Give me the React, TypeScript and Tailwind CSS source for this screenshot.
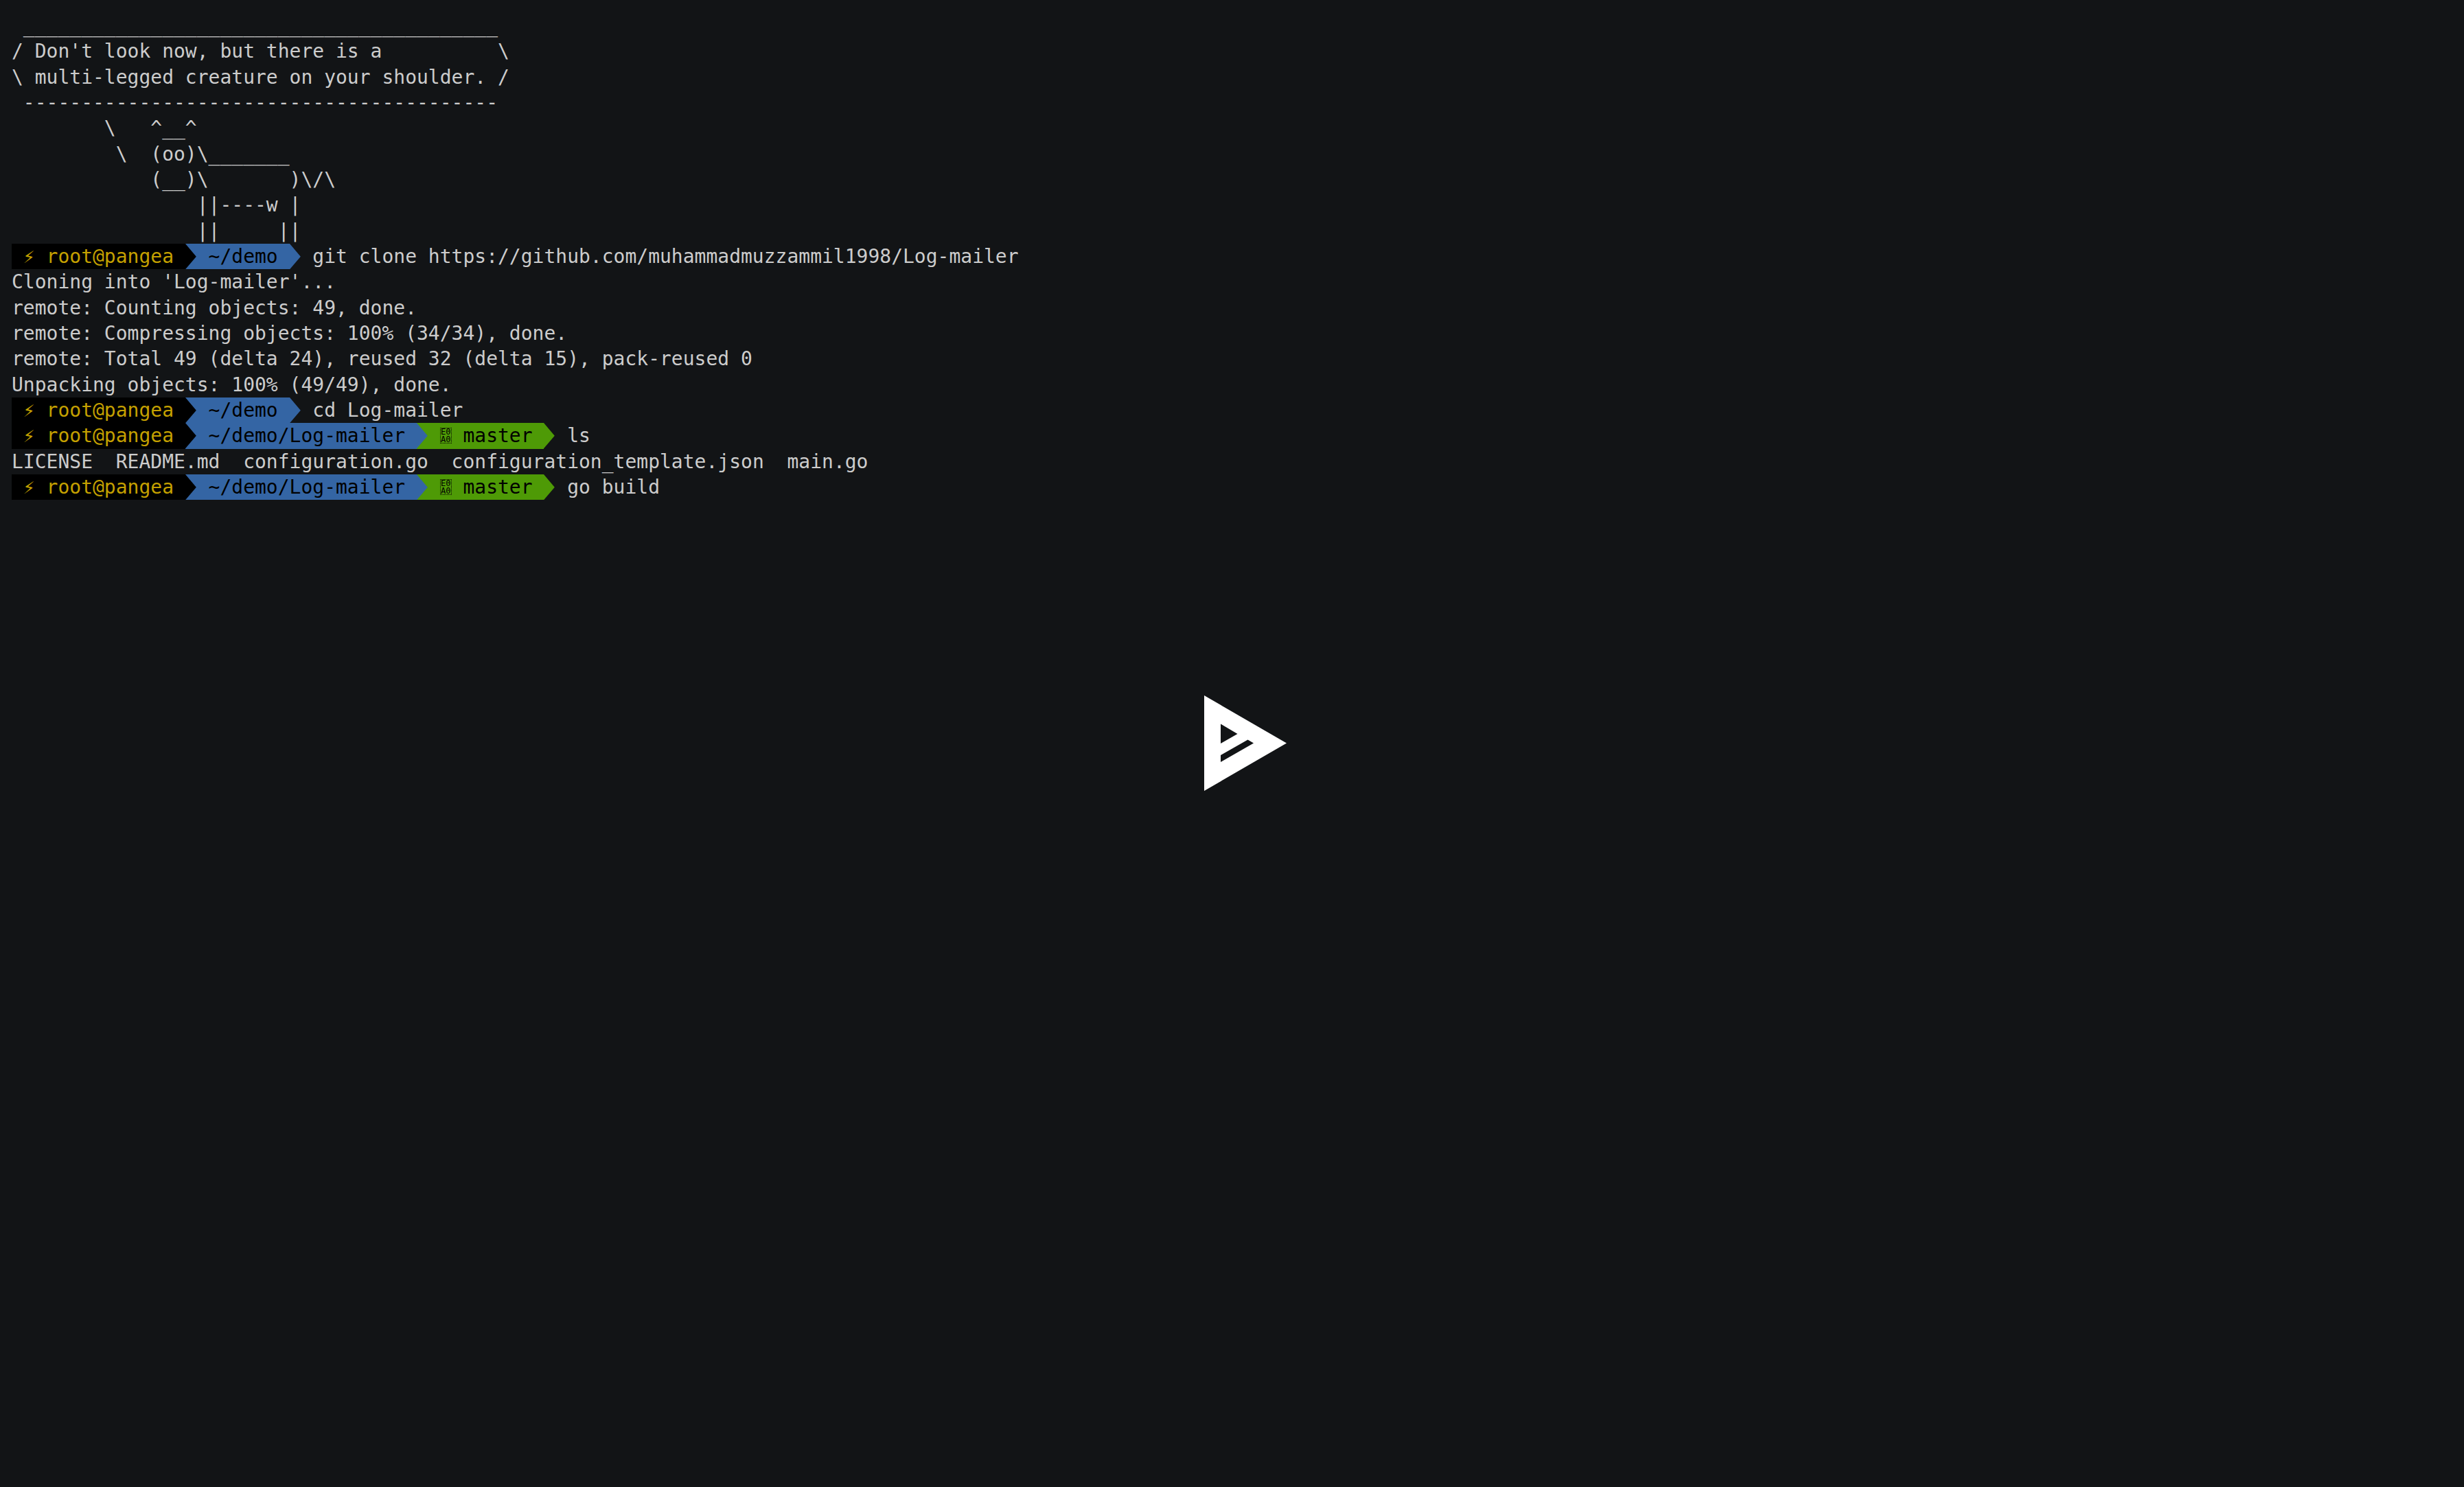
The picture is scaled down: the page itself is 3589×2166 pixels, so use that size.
import type { ReactNode } from "react";

const cowsay = [
  " _________________________________________",
  "/ Don't look now, but there is a          \\",
  "\\ multi-legged creature on your shoulder. /",
  " -----------------------------------------",
  "        \\   ^__^",
  "         \\  (oo)\\_______",
  "            (__)\\       )\\/\\",
  "                ||----w |",
  "                ||     ||",
];

const output = [
  "Cloning into 'Log-mailer'...",
  "remote: Counting objects: 49, done.",
  "remote: Compressing objects: 100% (34/34), done.",
  "remote: Total 49 (delta 24), reused 32 (delta 15), pack-reused 0",
  "Unpacking objects: 100% (49/49), done.",
];

function Line({ children }: { children: ReactNode }) {
  return <div className="h-[37.33px] whitespace-pre">{children}</div>;
}

// powerline separator, one terminal cell wide
function Arrow({ fill, bg }: { fill: string; bg: string }) {
  return (
    <svg
      viewBox="0 0 17 37"
      preserveAspectRatio="none"
      className={`h-full w-[1ch] shrink-0 ${bg}`}
    >
      <polygon points="0,0 16,18.5 0,37" className={fill} />
    </svg>
  );
}

// the font has no glyph for the branch symbol, so the terminal shows a hex box
function HexBox() {
  return (
    <span className="my-auto flex h-[23px] w-[16.86px] shrink-0 flex-col items-center justify-center border border-dotted border-black text-[12px] leading-[10.5px] font-normal">
      <span>E0</span>
      <span>A0</span>
    </span>
  );
}

function Prompt({
  path,
  branch,
  command,
}: {
  path: string;
  branch?: boolean;
  command: string;
}) {
  return (
    <div className="flex h-[37.33px] whitespace-pre">
      <span className="flex bg-black text-[#c4a000]">
        <span> </span>
        <span className="w-[1ch]">⚡</span>
        <span> root@pangea </span>
      </span>
      <Arrow fill="fill-black" bg="bg-[#3465a4]" />
      <span className="bg-[#3465a4] text-black"> {path} </span>
      {branch ? (
        <>
          <Arrow fill="fill-[#3465a4]" bg="bg-[#4e9a06]" />
          <span className="flex bg-[#4e9a06] text-black">
            <span> </span>
            <HexBox />
            <span> master </span>
          </span>
          <Arrow fill="fill-[#4e9a06]" bg="bg-transparent" />
        </>
      ) : (
        <Arrow fill="fill-[#3465a4]" bg="bg-transparent" />
      )}
      <span> {command}</span>
    </div>
  );
}

export default function App() {
  return (
    <div className="relative h-[2166px] w-[3589px] overflow-hidden bg-[#121416] font-['DejaVu_Sans_Mono',monospace] text-[28px] leading-[37.33px] text-[#cccccc]">
      <div className="pt-[19px] pl-[17px]">
        {cowsay.map((row, i) => (
          <Line key={i}>{row}</Line>
        ))}
        <Prompt
          path="~/demo"
          command="git clone https://github.com/muhammadmuzzammil1998/Log-mailer"
        />
        {output.map((row, i) => (
          <Line key={i}>{row}</Line>
        ))}
        <Prompt path="~/demo" command="cd Log-mailer" />
        <Prompt path="~/demo/Log-mailer" branch command="ls" />
        <Line>
          LICENSE  README.md  configuration.go  configuration_template.json  main.go
        </Line>
        <Prompt path="~/demo/Log-mailer" branch command="go build" />
      </div>

      {/* play overlay */}
      <div className="absolute inset-0 flex items-center justify-center pb-[1px] pl-[39px]">
        <svg viewBox="0 0 120 139" className="h-[139px] w-[120px]">
          <path
            fillRule="evenodd"
            fill="#ffffff"
            d="M0 0 L120 69.5 L0 139 Z M24 41.5 L24 70 L48.5 56 Z M24 87 L24 97 L72 69.5 L63.5 64.5 Z"
          />
        </svg>
      </div>
    </div>
  );
}
